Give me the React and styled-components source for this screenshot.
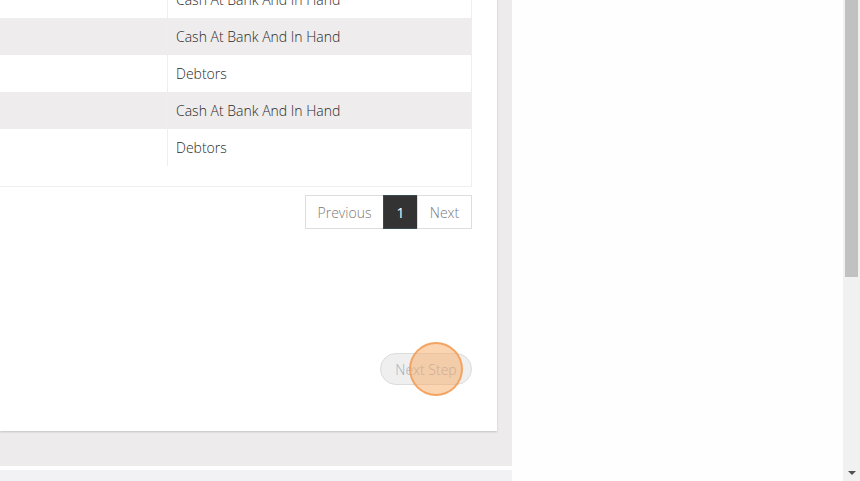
import React from "react";
import styled, { createGlobalStyle } from "styled-components";

const Global = createGlobalStyle`
  html, body { margin: 0; padding: 0; height: 100%; overflow: hidden; }
  body { font-family: "Open Sans", "Liberation Sans", sans-serif; background: #fefefe; }
`;

const Page = styled.div`
  display: flex;
  width: 860px;
  height: 481px;
  overflow: hidden;
`;

const LeftColumn = styled.div`
  width: 512px;
  flex: none;
  display: flex;
  flex-direction: column;
  background: #edebeb;
`;

const Card = styled.div`
  width: 497px;
  height: 450px;
  margin-top: -19px;
  background: #fff;
  box-shadow: 0 1px 2px rgba(0, 0, 0, 0.18);
  padding-right: 25px;
  box-sizing: border-box;
  display: flex;
  flex-direction: column;
  align-items: flex-end;
`;

const TableWrap = styled.div`
  width: 472px;
  border-right: 1px solid #eeeeee;
  border-bottom: 1px solid #eeeeee;
  box-sizing: border-box;
  padding-bottom: 20px;
`;

const Row = styled.div`
  display: grid;
  grid-template-columns: 167px 1fr;
  height: 37px;
  background: ${(p) => (p.$striped ? "#eeecec" : "#ffffff")};
`;

const Cell = styled.div`
  display: flex;
  align-items: center;
  padding-left: 8px;
  font-size: 14px;
  font-weight: 300;
  color: #2a2a2a;
  border-left: ${(p) => (p.$divided ? "1px solid #eeeeee" : "none")};
`;

const Pagination = styled.div`
  display: flex;
  margin-top: 8px;
  height: 34px;
`;

const PageButton = styled.div`
  display: flex;
  align-items: center;
  justify-content: center;
  font-size: 14px;
  font-weight: ${(p) => (p.$active ? 400 : 300)};
  color: ${(p) => (p.$active ? "#ffffff" : "#7a7a7a")};
  background: ${(p) => (p.$active ? "#333333" : "#ffffff")};
  border: 1px solid ${(p) => (p.$active ? "#3a4a52" : "#dddddd")};
  margin-left: -1px;
  box-sizing: border-box;
  width: ${(p) => p.$w}px;
`;

const StepArea = styled.div`
  margin-top: 124px;
  position: relative;
`;

const NextStep = styled.button`
  width: 92px;
  height: 32px;
  border-radius: 16px;
  border: 1px solid #dcdcdc;
  background: #efefef;
  color: #a3b0c2;
  font-family: "Open Sans", "Liberation Sans", sans-serif;
  font-size: 14px;
  font-weight: 300;
  padding: 0;
`;

const ClickMarker = styled.div`
  position: absolute;
  left: 29px;
  top: -11px;
  width: 50px;
  height: 50px;
  border-radius: 50%;
  border: 2px solid rgba(243, 160, 90, 0.9);
  background: rgba(247, 170, 100, 0.5);
  pointer-events: none;
`;

const GreyGap = styled.div`
  flex: 1;
`;

const WhiteLine = styled.div`
  height: 4px;
  background: #fefefe;
`;

const BottomStrip = styled.div`
  height: 11px;
  background: #f2f2f4;
`;

const RightPanel = styled.div`
  flex: 1;
  background: #fefefe;
`;

const Scrollbar = styled.div`
  width: 17px;
  flex: none;
  background: #f1f1f1;
  display: flex;
  flex-direction: column;
  align-items: center;
`;

const Thumb = styled.div`
  width: 13px;
  height: 277px;
  background: #c1c1c1;
`;

const Arrow = styled.div`
  margin-top: auto;
  margin-bottom: 6px;
  width: 0;
  height: 0;
  border-left: 4px solid transparent;
  border-right: 4px solid transparent;
  border-top: 4px solid #505050;
`;

const rows = [
  "Cash At Bank And In Hand",
  "Cash At Bank And In Hand",
  "Debtors",
  "Cash At Bank And In Hand",
  "Debtors",
];

export default function App() {
  return (
    <>
      <Global />
      <Page>
        <LeftColumn>
          <Card>
            <TableWrap>
              {rows.map((r, i) => (
                <Row key={i} $striped={i % 2 === 1}>
                  <Cell />
                  <Cell $divided>{r}</Cell>
                </Row>
              ))}
            </TableWrap>
            <Pagination>
              <PageButton $w={79}>Previous</PageButton>
              <PageButton $w={35} $active>1</PageButton>
              <PageButton $w={55}>Next</PageButton>
            </Pagination>
            <StepArea>
              <NextStep>Next Step</NextStep>
              <ClickMarker />
            </StepArea>
          </Card>
          <GreyGap />
          <WhiteLine />
          <BottomStrip />
        </LeftColumn>
        <RightPanel />
        <Scrollbar>
          <Thumb />
          <Arrow />
        </Scrollbar>
      </Page>
    </>
  );
}
